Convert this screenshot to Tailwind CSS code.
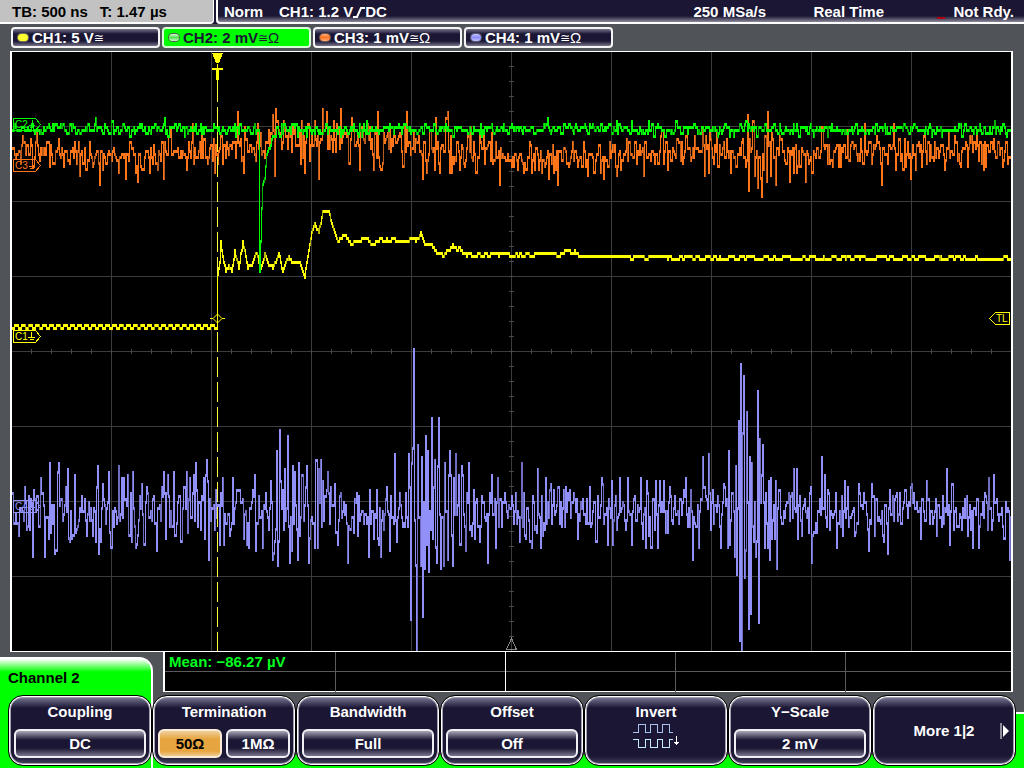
<!DOCTYPE html>
<html lang="en">
  <head>
    <meta charset="UTF-8" />
    <meta name="viewport" content="width=device-width, initial-scale=1.0" />
    <title>Oscilloscope</title>
    <script src="https://cdn.jsdelivr.net/npm/@tailwindcss/browser@4"></script>
  </head>
  <body class="flex min-h-screen flex-col bg-[#505458] font-['Liberation_Sans',Arial,sans-serif] text-[15px] leading-5 font-bold text-white">

    <!-- status bar -->
    <header class="flex h-6 gap-[2px] bg-[#1a1633] whitespace-nowrap">
      <div class="flex w-[214px] items-center gap-3 rounded-br-[4px] border-r border-b-2 border-white bg-[#c2c2c2] pt-[2px] pl-3 text-black">
        <span>TB: 500 ns</span>
        <span>T: 1.47 µs</span>
      </div>
      <div class="flex flex-1 items-center rounded-bl-[4px] border-b-2 border-l-2 border-white bg-[linear-gradient(#1a1633_16px,#8d8b9c)] pt-[2px] pr-[10px] pl-[6px]">
        <span class="w-[55px]">Norm</span>
        <span>CH1: 1.2 V</span>
        <svg class="h-3 w-3" viewBox="0 0 12 12" fill="none" stroke="#fff" stroke-width="2"><path d="M0 11H4L8 2H12" /></svg>
        <span>DC</span>
        <span class="ml-auto w-[120px]">250 MSa/s</span>
        <span class="w-[124px]">Real Time</span>
        <span class="mr-2 mb-[3px] h-[2px] w-2 self-end bg-[#b00010]"></span>
        <span>Not Rdy.</span>
      </div>
    </header>

    <!-- channels -->
    <nav class="flex gap-[2px] px-[11px] pt-[3px] pb-[3px] whitespace-nowrap">
      <button class="flex h-[21px] w-[149px] items-center rounded-[4px] border-2 border-[#f4f4f4] bg-[linear-gradient(#77748a,#1a1633_5px,#1a1633_12px,#77748a)] pl-[5px]">
        <span class="mr-[4px] h-[7px] w-[10px] rounded-full bg-[#ffff30] ring-1 ring-[#77705a]"></span>CH1: 5 V<span class="font-['DejaVu_Sans',sans-serif] text-[12px] font-normal">≅</span>
      </button>
      <button class="flex h-[21px] w-[149px] items-center rounded-[4px] border-2 border-[#d8ffd8] bg-[#00ff00] pl-[5px] text-[#1a1633]">
        <span class="mr-[4px] h-[7px] w-[10px] rounded-full bg-[linear-gradient(#d8f8d8,#50e050,#d8f8d8)] ring-1 ring-[#506050]"></span>CH2: 2 mV<span class="font-['DejaVu_Sans',sans-serif] text-[12px] font-normal">≅</span><span class="font-normal">Ω</span>
      </button>
      <button class="flex h-[21px] w-[149px] items-center rounded-[4px] border-2 border-[#f4f4f4] bg-[linear-gradient(#77748a,#1a1633_5px,#1a1633_12px,#77748a)] pl-[5px]">
        <span class="mr-[4px] h-[7px] w-[10px] rounded-full bg-[linear-gradient(#ffb080,#ff7420,#ffb080)] ring-1 ring-[#70564a]"></span>CH3: 1 mV<span class="font-['DejaVu_Sans',sans-serif] text-[12px] font-normal">≅</span><span class="font-normal">Ω</span>
      </button>
      <button class="flex h-[21px] w-[149px] items-center rounded-[4px] border-2 border-[#f4f4f4] bg-[linear-gradient(#77748a,#1a1633_5px,#1a1633_12px,#77748a)] pl-[5px]">
        <span class="mr-[4px] h-[7px] w-[10px] rounded-full bg-[linear-gradient(#c0c0ff,#8e8cf8,#c0c0ff)] ring-1 ring-[#5a5870]"></span>CH4: 1 mV<span class="font-['DejaVu_Sans',sans-serif] text-[12px] font-normal">≅</span><span class="font-normal">Ω</span>
      </button>
    </nav>

    <!-- waveforms -->
    <main class="mr-[11px] ml-[10px] border-x-2 border-y border-white bg-black">
      <svg class="block h-auto w-full" viewBox="12 52 999 599" fill="none" shape-rendering="crispEdges" font-family="Liberation Sans, Arial, sans-serif">
        <g stroke="#3c3c3c">
          <path id="grid" />
          <path id="ticks" stroke="#4a4a4a" />
        </g>
        <path id="c4" stroke="#918ff8" /><path id="c4dim" stroke="#6f6dc0" />
        <path id="c3" stroke="#ff7518" /><path id="c3dim" stroke="#b85a1c" />
        <path id="c1" stroke="#ffff00" /><path id="c1dim" stroke="#b8b800" />
        <path id="c2" stroke="#00ff00" /><path id="c2dim" stroke="#00b400" />

        <!-- trigger position -->
        <path d="M217.500 82V651" stroke="#ffff40" stroke-dasharray="20 5" />
        <path d="M217.500 64V82M217.500 275V330" stroke="#ffff00" />
        <path d="M212 53H223L219 63H216ZM212 68H223V70H219V80H216V70H212Z" fill="#ffff00" />
        <path d="M210 318.500H213L217.500 314L222 318.500H225M213 318.500L217.500 323L222 318.500" stroke="#ffff00" shape-rendering="auto" />
        <path d="M511.500 638.500L506.500 649.500H516.500Z" stroke="#8a8a8a" />

        <!-- channel and level markers -->
        <g font-size="10" font-weight="400">
          <g stroke="#00ff00">
            <path d="M13.500 118.500H35.500L40.500 124.500L35.500 130.500H13.500ZM32.500 120V127M29 125.500H35M30 127.500H34" />
            <text x="15" y="128" fill="#00ff00" stroke="none">C2</text>
          </g>
          <g stroke="#ff7518">
            <path d="M13.500 159.500H35.500L40.500 165.500L35.500 171.500H13.500ZM32.500 161V168M29 166.500H35M30 168.500H34" />
            <text x="15" y="169" fill="#ff7518" stroke="none">C3</text>
          </g>
          <g stroke="#ffff00">
            <path d="M13.500 330.500H35.500L40.500 336.500L35.500 342.500H13.500ZM31.500 332V338M28 337.500H35M30 339.500H34" />
            <text x="15" y="340" fill="#ffff00" stroke="none">C1</text>
          </g>
          <g stroke="#918ff8">
            <path d="M13.500 500.500H35.500L40.500 506.500L35.500 512.500H13.500ZM32.500 502V508M29 507.500H35M30 509.500H34" />
            <text x="15" y="510" fill="#918ff8" stroke="none">C4</text>
          </g>
          <path d="M1009.500 312.500H995.500L989.500 318.500L995.500 324.500H1009.500Z" stroke="#ffff00" fill="#000" />
          <text x="996" y="322" fill="#ffff00">TL</text>
        </g>
      </svg>
    </main>

    <footer class="relative z-0 flex flex-1 flex-col">
      <!-- green backdrop of the active channel menu -->
      <div class="absolute inset-x-0 top-[60px] bottom-0 -z-10 border-t-2 border-white bg-[#00ff00]"></div>
      <div class="absolute top-[43px] right-0 left-[153px] -z-10 mr-2 h-[60px] bg-[#505458]"></div>
      <div class="absolute top-[5px] bottom-0 left-0 -z-10 w-[153px] rounded-tr-[14px] border-t-2 border-r-2 border-white bg-[linear-gradient(#fff,#00ff00_13px)]"></div>

      <div class="flex h-10 items-start">
        <h1 class="w-[163px] pt-4 pl-2 text-black">Channel 2</h1>
        <table class="mr-[11px] h-[39px] flex-1 table-fixed border-collapse bg-black">
          <colgroup>
            <col class="w-[171px]" /><col class="w-[170px]" /><col class="w-[170px]" /><col class="w-[170px]" /><col />
          </colgroup>
          <tbody class="border-x-2 border-b border-white">
            <tr class="h-[19px] border-b border-[#5a5a5a]">
              <td class="border-r border-[#5a5a5a] p-0 pl-1 whitespace-nowrap text-[#00ff20]"><div class="h-[18px]">Mean: −86.27 µV</div></td>
              <td class="border-r border-r-white p-0"></td>
              <td class="border-r border-[#5a5a5a] p-0"></td>
              <td class="border-r border-[#5a5a5a] p-0"></td>
              <td class="p-0"></td>
            </tr>
            <tr class="h-5">
              <td class="border-r border-[#5a5a5a] p-0"></td>
              <td class="border-r border-r-white p-0"></td>
              <td class="border-r border-[#5a5a5a] p-0"></td>
              <td class="border-r border-[#5a5a5a] p-0"></td>
              <td class="p-0"></td>
            </tr>
          </tbody>
        </table>
      </div>

      <!-- soft keys -->
      <div class="mt-[3px] grid grid-cols-7 px-2 text-center whitespace-nowrap">
        <section class="h-[71px] rounded-[15px] border border-black bg-[linear-gradient(#8583a0,#1a1633_12px,#1a1633_60px,#4a4764)] px-[5px] pt-[6px] shadow-[inset_0_0_0_1px_#fff,inset_0_0_0_2px_#a09eb0]">
          <h2 class="mb-[7px]">Coupling</h2>
          <button class="h-[29px] w-full rounded-[6px] border-2 border-[#f0f0f4] bg-[linear-gradient(#aaa8b8,#1a1633_9px,#1a1633_17px,#77748a)]">DC</button>
        </section>
        <section class="h-[71px] rounded-[15px] border border-black bg-[linear-gradient(#8583a0,#1a1633_12px,#1a1633_60px,#4a4764)] px-[5px] pt-[6px] shadow-[inset_0_0_0_1px_#fff,inset_0_0_0_2px_#a09eb0]">
          <h2 class="mb-[7px]">Termination</h2>
          <div class="flex gap-1">
            <button class="h-[29px] flex-1 rounded-[6px] border-2 border-[#f8ecd8] bg-[linear-gradient(#f0cf9c,#e6a540_8px,#e6a540_20px,#efca90)] text-black">50Ω</button>
            <button class="h-[29px] flex-1 rounded-[6px] border-2 border-[#f0f0f4] bg-[linear-gradient(#aaa8b8,#1a1633_9px,#1a1633_17px,#77748a)]">1MΩ</button>
          </div>
        </section>
        <section class="h-[71px] rounded-[15px] border border-black bg-[linear-gradient(#8583a0,#1a1633_12px,#1a1633_60px,#4a4764)] px-[5px] pt-[6px] shadow-[inset_0_0_0_1px_#fff,inset_0_0_0_2px_#a09eb0]">
          <h2 class="mb-[7px]">Bandwidth</h2>
          <button class="h-[29px] w-full rounded-[6px] border-2 border-[#f0f0f4] bg-[linear-gradient(#aaa8b8,#1a1633_9px,#1a1633_17px,#77748a)]">Full</button>
        </section>
        <section class="h-[71px] rounded-[15px] border border-black bg-[linear-gradient(#8583a0,#1a1633_12px,#1a1633_60px,#4a4764)] px-[5px] pt-[6px] shadow-[inset_0_0_0_1px_#fff,inset_0_0_0_2px_#a09eb0]">
          <h2 class="mb-[7px]">Offset</h2>
          <button class="h-[29px] w-full rounded-[6px] border-2 border-[#f0f0f4] bg-[linear-gradient(#aaa8b8,#1a1633_9px,#1a1633_17px,#77748a)]">Off</button>
        </section>
        <button class="flex h-[71px] flex-col items-center rounded-[15px] border border-black bg-[linear-gradient(#8583a0,#1a1633_12px,#1a1633_60px,#4a4764)] pt-[6px] shadow-[inset_0_0_0_1px_#fff,inset_0_0_0_2px_#a09eb0]">
          <span>Invert</span>
          <svg class="mt-[2px] h-[25px] w-[46px]" viewBox="0 0 46 25" fill="none" shape-rendering="crispEdges">
            <path d="M0 8.500H5.500V.5H12.500V8.500H17.500V.5H24.500V8.500H29.500V.5H36.500V8.500H40" stroke="#a9c4ee" />
            <path d="M0 15.500H5.500V23.500H12.500V15.500H17.500V23.500H24.500V15.500H29.500V23.500H36.500V15.500H40" stroke="#c4ecfa" />
            <path d="M43.500 12V21M41 18.500H46M42 19.500H45" stroke="#fff" />
          </svg>
        </button>
        <section class="h-[71px] rounded-[15px] border border-black bg-[linear-gradient(#8583a0,#1a1633_12px,#1a1633_60px,#4a4764)] px-[5px] pt-[6px] shadow-[inset_0_0_0_1px_#fff,inset_0_0_0_2px_#a09eb0]">
          <h2 class="mb-[7px]">Y−Scale</h2>
          <button class="h-[29px] w-full rounded-[6px] border-2 border-[#f0f0f4] bg-[linear-gradient(#aaa8b8,#1a1633_9px,#1a1633_17px,#77748a)]">2 mV</button>
        </section>
        <button class="relative h-[71px] rounded-[15px] border border-black bg-[linear-gradient(#8583a0,#1a1633_12px,#1a1633_60px,#4a4764)] shadow-[inset_0_0_0_1px_#fff,inset_0_0_0_2px_#a09eb0]">
          <span>More 1|2</span>
          <svg class="absolute top-[27px] right-[5px] h-4 w-[10px]" viewBox="0 0 10 16"><path d="M1 0V16" stroke="#fff" /><path d="M3 2L9 8L3 14Z" fill="#fff" /></svg>
        </button>
      </div>
    </footer>

    <script>
      const X0 = 12, X1 = 1011;

      let seed = 7;
      function rnd() {
        seed = (seed * 16807) % 2147483647;
        return seed / 2147483647;
      }
      const gauss = () => (rnd() + rnd() + rnd() + rnd() - 2) * 1.7;

      // linear interpolation through [x, y] pairs
      function curve(pts, x) {
        for (let i = 1; i < pts.length; i++) {
          if (x <= pts[i][0]) {
            const [ax, ay] = pts[i - 1], [bx, by] = pts[i];
            return ay + (by - ay) * (x - ax) / (bx - ax);
          }
        }
        return pts[pts.length - 1][1];
      }

      // one vertical bar per pixel column, levels in steps of 3px
      const level = y => Math.round((y - 1) / 3) * 3 + 1;
      function draw(id, ys) {
        let on = '', dim = '';
        for (let i = 0; i < ys.length; i++) {
          const a = level(ys[Math.max(0, i - 1)]), b = level(ys[i]);
          const d = `M${X0 + i + 0.5} ${Math.min(a, b) - 1}V${Math.max(a, b) + 2}`;
          if (a !== b && rnd() < 0.2) dim += d; else on += d;
        }
        document.getElementById(id).setAttribute('d', on);
        document.getElementById(id + 'dim').setAttribute('d', dim);
      }

      function noise(base, amp, hold) {
        const ys = [];
        let y = 0, left = 0;
        for (let x = X0; x < X1; x++) {
          if (left-- <= 0) {
            y = gauss() * curve(amp, x);
            left = Math.floor(rnd() * hold);
          }
          ys.push(curve(base, x) + y);
        }
        return ys;
      }

      function spikes(ys, list) {
        list.forEach(([x, y]) => { ys[x - X0] = y; });
        return ys;
      }

      let grid = '', ticks = '';
      for (let x = 111; x < X1; x += 100) grid += `M${x + 0.5} 52V651`;
      for (let y = 126; y < 651; y += 75) grid += `M12 ${y + 0.5}H1011`;
      for (let x = 31; x < X1; x += 20) ticks += `M${x + 0.5} 349V354`;
      for (let y = 66; y < 651; y += 15) ticks += `M509 ${y + 0.5}H514`;
      document.getElementById('grid').setAttribute('d', grid);
      document.getElementById('ticks').setAttribute('d', ticks);

      draw('c4', spikes(
        noise([[12, 511], [1011, 511]], [[12, 17], [265, 17], [275, 25], [320, 22], [340, 16], [405, 18], [412, 40], [445, 28], [480, 15], [725, 14], [736, 50], [760, 36], [775, 16], [830, 14], [1011, 14]], 1.1),
        [[40, 478], [49, 463], [54, 553], [57, 472], [74, 475], [97, 466], [98, 553], [108, 472], [118, 466], [127, 475], [132, 472], [136, 543], [156, 549], [163, 472], [173, 472], [195, 463], [205, 475], [232, 478], [262, 547], [273, 553], [276, 451], [277, 564], [279, 430], [284, 469], [287, 436], [289, 561], [297, 558], [298, 463], [306, 466], [308, 562], [318, 469], [320, 460],
         [347, 561], [368, 556], [394, 454], [396, 540], [408, 454], [410, 618], [412, 448], [413, 350], [415, 564], [416, 651], [417, 445], [421, 457], [422, 615], [424, 567], [425, 436], [427, 451], [428, 570], [431, 418], [436, 562], [438, 418], [440, 567], [444, 463], [447, 558], [449, 451], [452, 564], [455, 454], [460, 543], [461, 466], [465, 549], [468, 463], [487, 561], [491, 475], [495, 546], [521, 463], [531, 546], [537, 469], [540, 546], [545, 478],
         [601, 478], [612, 543], [619, 478], [627, 478], [631, 543], [645, 546], [646, 481], [692, 558], [698, 546], [702, 457], [708, 454], [720, 546], [735, 466], [736, 573], [738, 421], [739, 640], [740, 364], [741, 651], [743, 376], [744, 576], [746, 412], [748, 628], [749, 457], [750, 613], [751, 463], [753, 540], [757, 391], [758, 622], [759, 439], [762, 445], [764, 546], [768, 481], [775, 481], [776, 568], [793, 469], [796, 469], [811, 562], [821, 457], [824, 475], [836, 546], [847, 487], [868, 550], [871, 484], [887, 552], [946, 469], [949, 543], [952, 484], [972, 546], [978, 546], [988, 478], [993, 475], [1009, 558]]
      ));

      draw('c3', spikes(
        noise([[12, 152], [130, 157], [230, 151], [265, 142], [275, 130], [300, 138], [340, 140], [380, 142], [420, 145], [480, 150], [540, 158], [600, 158], [690, 150], [800, 153], [1011, 150]], [[12, 8], [260, 9], [270, 14], [300, 11], [415, 12], [440, 13], [500, 9], [740, 9], [746, 20], [772, 16], [780, 9], [1011, 8]], 1.3),
        [[22, 137], [36, 133], [79, 174], [99, 183], [125, 178], [137, 181], [163, 178], [170, 128], [192, 125], [214, 172], [237, 112], [243, 171], [272, 115], [274, 174], [275, 109], [304, 171], [318, 177], [322, 109], [326, 112], [340, 109], [359, 169], [373, 169], [406, 112], [422, 178], [426, 171], [439, 171], [447, 112], [451, 172], [459, 170], [499, 183], [548, 178], [553, 172], [587, 175], [616, 176], [643, 174], [708, 172], [747, 115], [748, 189], [761, 195], [767, 112], [766, 180], [775, 183], [789, 180], [805, 180], [847, 130], [864, 124], [881, 183], [893, 124], [910, 178], [944, 169], [976, 131], [1002, 165]]
      ));

      // CH1 supply step with ringing
      const c1 = [[12, 328], [216, 328], [217, 275], [219, 262], [220, 242], [222, 256], [225, 270], [228, 266], [231, 270], [234, 251], [238, 269], [242, 242], [247, 266], [251, 265], [256, 251], [260, 268], [264, 255], [268, 266], [272, 267], [278, 254], [282, 270], [288, 258], [292, 264], [295, 261], [299, 262], [304, 276], [308, 250], [311, 231], [314, 224], [318, 231], [322, 212], [328, 212], [334, 232], [337, 242], [340, 238], [344, 234], [350, 243], [366, 237], [371, 245], [380, 240], [391, 240], [410, 241], [415, 239], [420, 234], [424, 243], [431, 245], [438, 254], [443, 254], [452, 246], [458, 249], [466, 254], [540, 255], [548, 252], [560, 253], [572, 251], [580, 256], [600, 257], [1011, 258]];
      const flat = noise(c1, [[12, 1], [216, 1], [217, 0], [230, 1], [300, 1], [304, 0], [335, 0], [345, 1], [1011, 1]], 5);
      for (let x = X0; x < 217; x++) flat[x - X0] = x % 7 < 4 ? 325 : 328;
      draw('c1', flat);

      // CH2 with the negative glitch
      const c2 = noise([[12, 129], [258, 129], [259, 272], [261, 208], [262, 184], [264, 178], [266, 155], [270, 142], [276, 130], [520, 129], [600, 127], [640, 129], [1011, 129]], [[12, 3], [255, 3], [259, 0], [266, 1], [280, 3], [1011, 3]], 1.4);
      draw('c2', spikes(c2, [[547, 117], [631, 121], [95, 118], [164, 119]]));
    </script>
  </body>
</html>
